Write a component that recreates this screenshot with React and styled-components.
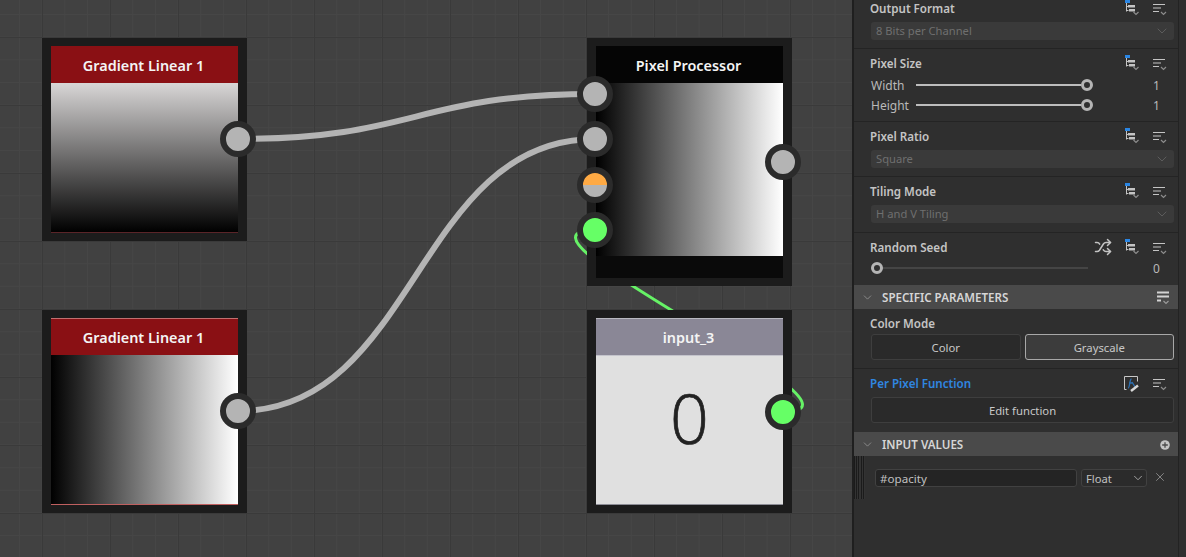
import React from 'react'
import styled, { createGlobalStyle } from 'styled-components'
import { Shuffle, X, ChevronDown } from 'lucide-react'

const Global = createGlobalStyle`
    html, body { margin: 0; padding: 0; background: #414141; overflow: hidden; }
    * { box-sizing: border-box; }
    body { font-family: "Noto Sans", "Open Sans", sans-serif; }
`

const Page = styled.div`
    width: 1186px;
    height: 557px;
    display: flex;
    overflow: hidden;
`

const Canvas = styled.div`
    position: relative;
    width: 852px;
    height: 557px;
    flex: none;
    background-color: #414141;
    background-image:
        linear-gradient(to right, #3a3a3a 1px, transparent 1px),
        linear-gradient(to bottom, #3a3a3a 1px, transparent 1px),
        linear-gradient(to right, #464646 1px, transparent 1px),
        linear-gradient(to bottom, #464646 1px, transparent 1px);
    background-size: 68px 68px, 68px 68px, 22.67px 22.67px, 22.67px 22.67px;
    background-position: 42px 37px, 42px 37px, 19px 14px, 19px 14px;
`

const Wires = styled.svg`
    position: absolute;
    inset: 0;
`

const Node = styled.div`
    position: absolute;
    left: ${p => p.$x}px;
    top: ${p => p.$y}px;
    width: 205px;
    padding: 8px 9px;
    background: #1c1c1c;
    display: flex;
    flex-direction: column;
`

const NodeHead = styled.div`
    height: 37px;
    display: flex;
    align-items: center;
    justify-content: center;
    padding-right: 2px;
    background: ${p => p.$bg};
    color: #f4f4f4;
    font-size: 14.4px;
    font-weight: 600;
    border-top: 1px solid ${p => p.$edge || p.$bg};
`

const Preview = styled.div`
    height: ${p => p.$h}px;
    background: ${p => p.$fill};
    border-bottom: 1px solid ${p => p.$edge || 'transparent'};
`

const NodeFoot = styled.div`
    height: 22px;
    background: #0a0a0a;
`

const Constant = styled.div`
    height: 150px;
    background: #e0e0e0;
    color: #222;
    font-family: "Open Sans", sans-serif;
    font-weight: 300;
    font-size: 68px;
    -webkit-text-stroke: 0.7px #222;
    display: flex;
    align-items: center;
    justify-content: center;
    padding-bottom: 26px;
    border-top: 1px solid #c4c4cc;
    border-bottom: 1px solid #8d8d96;
`

const Port = styled.div`
    position: absolute;
    left: ${p => p.$x - 18}px;
    top: ${p => p.$y - 18}px;
    width: 36px;
    height: 36px;
    border-radius: 50%;
    border: 6px solid #2b2b2b;
    background: ${p => p.$fill || '#b4b4b4'};
`

const Panel = styled.div`
    width: 334px;
    height: 557px;
    flex: none;
    display: flex;
    background: #2f2f2f;
`

const PanelEdge = styled.div`
    width: 2px;
    background: #1f1f1f;
`

const PanelBody = styled.div`
    width: 325px;
    flex: none;
    display: flex;
    flex-direction: column;
    border-right: 1px solid #232323;
`

const Group = styled.div`
    display: flex;
    flex-direction: column;
    gap: 6px;
    padding: ${p => p.$top}px 4px ${p => p.$bottom}px 16px;
    border-bottom: ${p => (p.$plain ? 'none' : '1px solid #242424')};
`

const Head = styled.div`
    height: 16px;
    display: flex;
    align-items: center;
    justify-content: space-between;
    padding-right: 6px;
`

const Label = styled.span`
    font-size: 11.6px;
    font-weight: 600;
    color: ${p => (p.$blue ? '#2f86e0' : '#c4c4c4')};
`

const IconRow = styled.div`
    display: flex;
    align-items: center;
    gap: 11px;
    color: #c4c4c4;
    svg { display: block; }
`

const SelectBox = styled.div`
    height: 18px;
    margin-left: 1px;
    padding: 0 4px 1px 5px;
    border-radius: 3px;
    background: #3a3a3a;
    color: #6f6f6f;
    font-size: 11.2px;
    display: flex;
    align-items: center;
    justify-content: space-between;
`

const SliderRows = styled.div`
    display: flex;
    flex-direction: column;
    margin-top: -2px;
`

const SliderRow = styled.div`
    height: 20px;
    display: flex;
    align-items: center;
    padding-left: 1px;
    margin-top: ${p => p.$shift || 0}px;
    color: #b9b9b9;
    font-size: 12px;
`

const SliderName = styled.span`
    width: 45px;
    flex: none;
`

const Track = styled.div`
    width: ${p => p.$w}px;
    height: 2px;
    flex: none;
    position: relative;
    background: ${p => p.$bg};
`

const Knob = styled.div`
    position: absolute;
    top: -5px;
    ${p => (p.$start ? 'left: 0;' : 'right: -12px;')}
    width: 12px;
    height: 12px;
    border-radius: 50%;
    border: 3px solid #b5b5b5;
    background: #2f2f2f;
`

const SliderValue = styled.span`
    margin-left: auto;
    width: 21px;
    text-align: left;
`

const Section = styled.div`
    height: 24px;
    flex: none;
    display: flex;
    align-items: center;
    padding: 1px 8px 0 7px;
    background: #4a4a4a;
    color: #d6d6d6;
    font-size: 11.6px;
    font-weight: 600;
    svg { display: block; }
`

const SectionName = styled.span`
    margin-left: 8px;
    flex: 1;
`

const Buttons = styled.div`
    display: flex;
    gap: 4px;
    margin-left: 1px;
    margin-top: ${p => p.$shift || 0}px;
`

const Button = styled.div`
    flex: 1;
    height: 26px;
    border-radius: 3px;
    display: flex;
    align-items: center;
    justify-content: center;
    font-size: 11.3px;
    color: #c8c8c8;
    background: ${p => (p.$on ? '#3c3c3c' : '#2a2a2a')};
    border: 1px solid ${p => (p.$on ? '#a8a8a8' : '#3e3e3e')};
`

const InputRow = styled.div`
    display: flex;
    align-items: flex-start;
`

const Handle = styled.div`
    width: 11px;
    height: 43px;
    flex: none;
    background: repeating-linear-gradient(to right, #1b1b1b 0 1px, #333 1px 2.2px);
`

const Field = styled.div`
    width: 202px;
    height: 18px;
    margin: 13px 0 0 10px;
    padding: 0 6px 0 4px;
    flex: none;
    display: flex;
    align-items: center;
    border-radius: 3px;
    border: 1px solid #414141;
    background: #242424;
    color: #c0c0c0;
    font-size: 11.6px;
`

const Kind = styled(Field)`
    width: 66px;
    margin-left: 4px;
    background: #2b2b2b;
    justify-content: space-between;
    font-size: 11.2px;
    padding-right: 1px;
`

const Remove = styled.div`
    margin: 14px 0 0 6px;
    color: #c0c0c0;
    svg { display: block; }
`

const Gutter = styled.div`
    flex: 1;
    background: #2f2f2f;
`

// blue dot + little tree + chevron
const TreeIcon = () => (
    <svg width="18" height="16" viewBox="0 0 18 16">
        <rect x="2" y="0" width="5" height="3" fill="#2a86e4" />
        <path d="M3.5 3v8.5M3.5 6.5h2M3.5 10.5h2" stroke="#c4c4c4" fill="none" />
        <rect x="5" y="5" width="7" height="2.5" fill="#c4c4c4" />
        <rect x="6" y="9" width="6" height="2.5" fill="#c4c4c4" />
        <path d="M10.5 12l2.5 2.5 2.5-2.5" stroke="#8c8c8c" strokeWidth="1.2" fill="none" />
    </svg>
)

const MenuIcon = () => (
    <svg width="16" height="16" viewBox="0 0 16 16">
        <path d="M1 4.5h12M1 8h8M1 11.5h6" stroke="#c4c4c4" fill="none" />
        <path d="M9 12l2.500 2.500L14 12" stroke="#8c8c8c" strokeWidth="1.2" fill="none" />
    </svg>
)

const BigMenuIcon = () => (
    <svg width="14" height="16" viewBox="0 0 14 16">
        <path d="M1 2.500h12M1 6.500h12" stroke="#d2d2d2" strokeWidth="2" fill="none" />
        <path d="M1 10.500h4" stroke="#d2d2d2" strokeWidth="2" fill="none" />
        <path d="M7.500 11l2.500 2.500 2.500-2.500" stroke="#9a9a9a" strokeWidth="1.2" fill="none" />
    </svg>
)

const FunctionIcon = () => (
    <svg width="18" height="17" viewBox="0 0 18 17">
        <path d="M1.500 14.500v-13h13v5" stroke="#c8c8c8" fill="none" />
        <path d="M1.500 14.500h2" stroke="#c8c8c8" fill="none" />
        <path d="M5 13c2 0 1.500-9 3.500-9M6 8h4M9 7l3 5" stroke="#2d6fb0" strokeWidth="1.4" fill="none" />
        <path d="M8 16l7-5.500" stroke="#d8d8d8" strokeWidth="2.4" fill="none" />
    </svg>
)

const AddIcon = () => (
    <svg width="10" height="10" viewBox="0 0 10 10">
        <circle cx="5" cy="5" r="4.800" fill="#c4c4c4" />
        <path d="M5 2.200v5.600M2.200 5h5.600" stroke="#4a4a4a" strokeWidth="1.300" />
    </svg>
)

const Fold = () => <ChevronDown size={13} strokeWidth={1.2} color="#a8a8a8" />

const Actions = ({ shuffle }) => (
    <IconRow>
        {shuffle && <Shuffle size={18} strokeWidth={2} color="#c4c4c4" />}
        <TreeIcon />
        <MenuIcon />
    </IconRow>
)

const SelectGroup = ({ label, value, top = 6, bottom = 8 }) => (
    <Group $top={top} $bottom={bottom}>
        <Head>
            <Label>{label}</Label>
            <Actions />
        </Head>
        <SelectBox>
            {value}
            <ChevronDown size={16} strokeWidth={1.5} color="#5c5c5c" />
        </SelectBox>
    </Group>
)

const Slider = ({ name }) => (
    <SliderRow>
        <SliderName>{name}</SliderName>
        <Track $w={165} $bg="#bdbdbd">
            <Knob />
        </Track>
        <SliderValue>1</SliderValue>
    </SliderRow>
)

const App = () => (
    <Page>
        <Global />
        <Canvas>
            <Wires width="852" height="557">
                <path d="M238 139 C416 139 416 94 595 94" stroke="#b4b4b4" strokeWidth="6" fill="none" />
                <path d="M238 411 C416 411 416 139 595 139" stroke="#b4b4b4" strokeWidth="6" fill="none" />
                <path d="M783 412 C895 412 483 230 595 230" stroke="#66f266" strokeWidth="3" fill="none" />
            </Wires>

            <Node $x={42} $y={38}>
                <NodeHead $bg="#8a1014">Gradient Linear 1</NodeHead>
                <Preview $h={150} $edge="#5a2428" $fill="linear-gradient(to bottom, #d8d6d6, #000)" />
            </Node>
            <Node $x={42} $y={310}>
                <NodeHead $bg="#8a1014" $edge="#c07070">Gradient Linear 1</NodeHead>
                <Preview $h={150} $edge="#c06060" $fill="linear-gradient(to right, #000, #fff)" />
            </Node>
            <Node $x={587} $y={38}>
                <NodeHead $bg="#050505">Pixel Processor</NodeHead>
                <Preview $h={173} $fill="linear-gradient(to right, #000, #fff)" />
                <NodeFoot />
            </Node>
            <Node $x={587} $y={310}>
                <NodeHead $bg="#8a8796" $edge="#b8b8c0">input_3</NodeHead>
                <Constant>0</Constant>
            </Node>

            <Port $x={238} $y={139} />
            <Port $x={238} $y={411} />
            <Port $x={595} $y={94} />
            <Port $x={595} $y={139} />
            <Port $x={595} $y={185} $fill="linear-gradient(to bottom, #ffaa44 50%, #b4b4b4 50%)" />
            <Port $x={595} $y={230} $fill="#66ff66" />
            <Port $x={783} $y={162} />
            <Port $x={783} $y={412} $fill="#66ff66" />
        </Canvas>

        <Panel>
            <PanelEdge />
            <PanelBody>
                <SelectGroup label="Output Format" value="8 Bits per Channel" top={0} />
                <Group $top={6} $bottom={6}>
                    <Head>
                        <Label>Pixel Size</Label>
                        <Actions />
                    </Head>
                    <SliderRows>
                        <Slider name="Width" />
                        <Slider name="Height" />
                    </SliderRows>
                </Group>
                <SelectGroup label="Pixel Ratio" value="Square" />
                <SelectGroup label="Tiling Mode" value="H and V Tiling" bottom={9} />
                <Group $top={6} $bottom={7} $plain>
                    <Head>
                        <Label>Random Seed</Label>
                        <Actions shuffle />
                    </Head>
                    <SliderRow $shift={-3}>
                        <Track $w={217} $bg="#454545">
                            <Knob $start />
                        </Track>
                        <SliderValue>0</SliderValue>
                    </SliderRow>
                </Group>
                <Section>
                    <Fold />
                    <SectionName>SPECIFIC PARAMETERS</SectionName>
                    <BigMenuIcon />
                </Section>
                <Group $top={6} $bottom={8}>
                    <Head>
                        <Label>Color Mode</Label>
                    </Head>
                    <Buttons $shift={-3}>
                        <Button>Color</Button>
                        <Button $on>Grayscale</Button>
                    </Buttons>
                </Group>
                <Group $top={6} $bottom={9} $plain>
                    <Head>
                        <Label $blue>Per Pixel Function</Label>
                        <IconRow>
                            <FunctionIcon />
                            <MenuIcon />
                        </IconRow>
                    </Head>
                    <Buttons>
                        <Button>Edit function</Button>
                    </Buttons>
                </Group>
                <Section>
                    <Fold />
                    <SectionName>INPUT VALUES</SectionName>
                    <AddIcon />
                </Section>
                <InputRow>
                    <Handle />
                    <Field>#opacity</Field>
                    <Kind>
                        Float
                        <ChevronDown size={14} strokeWidth={1.5} color="#b0b0b0" />
                    </Kind>
                    <Remove>
                        <X size={14} strokeWidth={1} />
                    </Remove>
                </InputRow>
            </PanelBody>
            <Gutter />
        </Panel>
    </Page>
)

export default App
